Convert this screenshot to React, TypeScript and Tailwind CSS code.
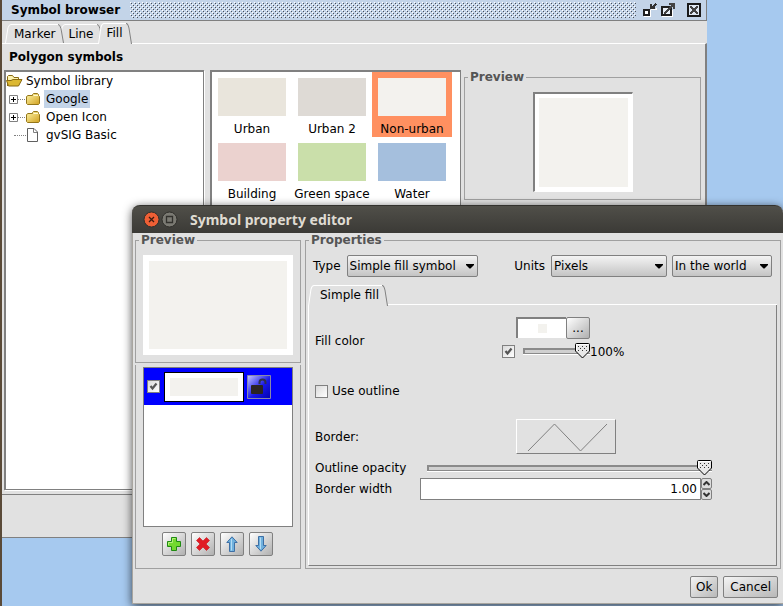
import { FC, InputHTMLAttributes, ReactNode, SelectHTMLAttributes, useState } from 'react';

interface SymbolItem {
  name: string;
  color: string;
}

const symbols: SymbolItem[] = [
  { name: 'Urban', color: 'bg-[#e9e5dc]' },
  { name: 'Urban 2', color: 'bg-[#dedad5]' },
  { name: 'Non-urban', color: 'bg-[#f3f2ee]' },
  { name: 'Building', color: 'bg-[#ebd2cf]' },
  { name: 'Green space', color: 'bg-[#cadfaa]' },
  { name: 'Water', color: 'bg-[#a5bfdd]' },
];

const folders = ['Google', 'Open Icon'];

interface TabProps {
  label: string;
  active?: boolean;
  wide?: boolean;
  className?: string;
}

const Tab: FC<TabProps> = ({ label, active, wide, className = '' }) => (
  <button
    type="button"
    role="tab"
    aria-selected={!!active}
    className={`relative flex items-stretch ${active ? 'z-20 -mb-px h-[21px]' : 'h-[19px]'} ${className}`}
  >
    <svg viewBox="0 0 6 20" preserveAspectRatio="none" className="h-full w-1.5">
      <path d="M0 20L3 4Q4 .5 6 .5V20Z" fill="#e1e1e1" />
      <path d="M.5 20L3 4Q4 .5 6 .5" fill="none" stroke="#fff" />
    </svg>
    <span
      className={`border-t border-white bg-[#e1e1e1] leading-[18px] ${wide ? 'pr-[3px] pl-1.5' : 'px-[3px]'}`}
    >
      {label}
    </span>
    <svg viewBox="0 0 6 20" preserveAspectRatio="none" className="h-full w-1.5">
      <path d="M0 .5Q2 .5 3 5L5.500 20H0Z" fill="#e1e1e1" />
      <path d="M0 .5Q2 .5 3 5L5.500 20" fill="none" stroke="#808080" />
    </svg>
  </button>
);

const Checkbox: FC<InputHTMLAttributes<HTMLInputElement>> = (props) => (
  <span className="relative block size-[13px] shrink-0">
    <input
      type="checkbox"
      className="peer block size-[13px] appearance-none border border-[#808080] bg-linear-to-br from-[#dadada] to-white"
      {...props}
    />
    <svg
      viewBox="0 0 13 13"
      className="pointer-events-none absolute inset-0 hidden size-[13px] peer-checked:block"
    >
      <path d="M3.500 6L5.500 8.500L9.500 3.500" fill="none" stroke="#555" strokeWidth="2.200" />
    </svg>
  </span>
);

const Select: FC<SelectHTMLAttributes<HTMLSelectElement>> = ({ className, ...props }) => (
  <span className={`relative block ${className}`}>
    <select
      className="block h-[22px] w-full appearance-none rounded-xs border border-[#808080] bg-linear-to-b from-[#f4f4f4] to-[#c4c4c4] pl-0.5 leading-5"
      {...props}
    />
    <svg viewBox="0 0 8 5" className="pointer-events-none absolute top-[9px] right-1 h-[5px] w-2">
      <path d="M0 0H8V1L4.500 4.500H3.500L0 1Z" />
    </svg>
  </span>
);

interface SliderProps {
  label: string;
  value: number;
  onChange: (value: number) => void;
  className?: string;
}

const Slider: FC<SliderProps> = ({ label, value, onChange, className }) => (
  <span className={`relative block h-4 ${className}`}>
    <span className="mt-[5px] block h-1.5 border-t-2 border-b border-l-2 border-[#8a8a8a] bg-[#d0d0d0] shadow-[0_1px_0_#fff]" />
    <span className="absolute inset-y-0 right-[15px] left-0">
      <svg
        viewBox="0 0 15 16"
        className="absolute top-0 h-4 w-[15px]"
        style={{ left: `${value}%` }}
      >
        <path d="M.5 1.500Q.5 .5 1.500 .5H13.500Q14.500 .5 14.500 1.500V8L7.500 15L.5 8Z" fill="#e8e8e8" stroke="#000" />
        <path d="M1.500 8V1.500H13.500" fill="none" stroke="#fff" />
        <path
          d="M3 3h1v1H3zM7 3h1v1H7zM11 3h1v1h-1zM5 5h1v1H5zM9 5h1v1H9zM3 7h1v1H3zM7 7h1v1H7zM11 7h1v1h-1z"
          fill="#333"
        />
      </svg>
    </span>
    <input
      type="range"
      aria-label={label}
      value={value}
      onChange={(e) => onChange(Number(e.target.value))}
      className="absolute inset-0 m-0 h-4 w-full opacity-0"
    />
  </span>
);

const Group: FC<{ title: string; className?: string; children: ReactNode }> = ({
  title,
  className = '',
  children,
}) => (
  <fieldset className={`min-w-0 border border-[#a0a0a0] ${className}`}>
    <legend className="ml-[3px] px-0.5 leading-[15px] font-bold text-[#555]">{title}</legend>
    {children}
  </fieldset>
);

const IconButton: FC<{ label: string; children: ReactNode }> = ({ label, children }) => (
  <button
    type="button"
    aria-label={label}
    className="flex size-6 items-center justify-center rounded-xs border border-[#808080] bg-linear-to-br from-white to-[#b0b0b0]"
  >
    {children}
  </button>
);

const FolderIcon: FC = () => (
  <svg viewBox="0 0 14 12" className="h-3 w-3.5">
    <defs>
      <linearGradient id="folder" x1="0" y1="0" x2="1" y2="1">
        <stop offset="0" stopColor="#fff6a8" />
        <stop offset="1" stopColor="#d0a020" />
      </linearGradient>
    </defs>
    <path
      d="M.5 3.500L2 2.500H6.500V1.500L7.500 .5H11.500L12.500 1.500V2.500L13.500 3.500V10.500L12.500 11.500H1.500L.5 10.500Z"
      fill="url(#folder)"
      stroke="#94761a"
    />
    <path d="M7.500 2.500H12" stroke="#fffbd0" />
  </svg>
);

const OpenFolderIcon: FC = () => (
  <svg viewBox="0 0 17 12" className="h-3 w-[17px]">
    <path d="M1.500 11V1.500L2.500 .5H6.500L8 2.500H12.500V5" fill="#fdf3b0" stroke="#8a6a10" />
    <path d="M.5 5.500H5L7 4.500H16L12.500 11H2.500Z" fill="#dcb832" stroke="#8a6a10" />
  </svg>
);

const SymbolBrowser: FC = () => {
  const [selected, setSelected] = useState('Non-urban');

  return (
    <section className="flex flex-1 flex-col border-b border-[#808080] bg-[#e1e1e1]">
      <header className="flex h-[21px] items-center border-r border-b border-[#808080] bg-[#c3d4e8] pr-[5px] pl-[9px]">
        <h1 className="w-[114px] leading-[18px] font-bold whitespace-nowrap">Symbol browser</h1>
        <svg className="mr-[7px] ml-[5px] h-4 min-w-0 flex-1">
          <defs>
            <pattern id="bumps" width="4" height="4" patternUnits="userSpaceOnUse">
              <path d="M0 0h1v1H0zM2 2h1v1H2z" fill="#fff" />
              <path d="M1 1h1v1H1zM3 3h1v1H3z" fill="#4a4f56" />
            </pattern>
          </defs>
          <rect width="100%" height="100%" fill="url(#bumps)" />
        </svg>
        <button type="button" aria-label="Minimize" className="mr-1">
          <svg viewBox="0 0 14 14" className="size-3.5" shapeRendering="crispEdges">
            <path d="M1 13.500H7.500V7" fill="none" stroke="#fff" />
            <path d="M1 7H6V12H1Z" fill="#fff" stroke="#1e1e1e" strokeWidth="2" />
            <path d="M7 1h2v3h3v2H7zM9 4V3h1V2h1V1h1V0h1v1h1v1h-1v1h-1v1z" fill="#333" />
            <path d="M8 6.500H13V5" fill="none" stroke="#fff" />
          </svg>
        </button>
        <button type="button" aria-label="Maximize" className="mr-3">
          <svg viewBox="0 0 14 14" className="size-3.5" shapeRendering="crispEdges">
            <path d="M1 13.500H11.500V7" fill="none" stroke="#fff" />
            <path d="M1 4H10V12H1Z" fill="#e6edf5" stroke="#1e1e1e" strokeWidth="2" />
            <path d="M3 11V9h1V8h1V7h1V6h1V5h1V4h1V3h1V2H8V0h6v6h-2V4h-1v1h-1v1H9v1H8v1H7v1H6v1H5v1z" fill="#444" />
          </svg>
        </button>
        <button type="button" aria-label="Close">
          <svg viewBox="0 0 14 14" className="size-3.5" shapeRendering="crispEdges">
            <path d="M0 0H14V14H0Z" fill="#1a1a1a" />
            <path d="M2 2H12V12H2Z" fill="#dfe8f2" />
            <path d="M3 3h2v1h1v1h2V4h1V3h2v2h-1v1H9v2h1v1h1v2H9v-1H8V9H6v1H5v1H3V9h1V8h1V6H4V5H3z" fill="#444" />
          </svg>
        </button>
      </header>

      <div className="flex h-[22px] items-end pl-[3px]" role="tablist">
        <Tab label="Marker" className="z-10" />
        <Tab label="Line" className="-ml-[5px]" />
        <Tab label="Fill" active className="-ml-[5px]" />
      </div>
      <div className="flex flex-1 flex-col border-t border-r-2 border-t-white border-r-[#808080]">
        <h2 className="pl-[7px] leading-[26px] font-bold">Polygon symbols</h2>
        <div className="flex flex-1 pr-1 pb-1 pl-0.5">
          <ul className="w-[200px] border border-t-2 border-l-2 border-[#808080] bg-white leading-[18px] shadow-[1px_1px_0_#fff]">
            <li>
              <div className="flex items-center">
                <OpenFolderIcon />
                <span className="px-[3px]">Symbol library</span>
              </div>
              <ul>
                {folders.map((name) => (
                  <li key={name} className="flex items-center pl-[3px]">
                    <svg viewBox="0 0 9 9" className="size-[9px]">
                      <path d="M.5 .5H8.500V8.500H.5Z" fill="#fff" stroke="#808080" />
                      <path d="M2 4.500H7M4.500 2V7" stroke="#000" />
                    </svg>
                    <span className="mr-px w-[7px] border-t border-dotted border-[#808080]" />
                    <FolderIcon />
                    <span className={`ml-1 px-0.5 ${name === 'Google' ? 'bg-[#c3d4e8]' : ''}`}>
                      {name}
                    </span>
                  </li>
                ))}
                <li className="flex items-center pl-2">
                  <span className="mr-px w-3 border-t border-dotted border-[#808080]" />
                  <svg viewBox="0 0 11 14" className="h-3.5 w-[11px]">
                    <path d="M.5 .5H7L10.500 4V13.500H.5Z" fill="#fff" stroke="#606060" />
                    <path d="M6.500 1V4.500H10" fill="none" stroke="#808080" />
                  </svg>
                  <span className="ml-1.5 px-0.5">gvSIG Basic</span>
                </li>
              </ul>
            </li>
          </ul>

          <div className="ml-1.5 w-[251px] border border-t-2 border-l-2 border-[#808080] bg-white">
            <div className="grid grid-cols-[repeat(3,80px)]">
              {symbols.map(({ name, color }) => (
                <button
                  key={name}
                  type="button"
                  onClick={() => setSelected(name)}
                  className={`flex h-[65px] flex-col items-center pt-1.5 ${selected === name ? 'bg-[#ff9060]' : ''}`}
                >
                  <span className={`h-[38px] w-[68px] shrink-0 ${color}`} />
                  <span className="mt-[5px] leading-4 whitespace-nowrap">{name}</span>
                </button>
              ))}
            </div>
          </div>

          <Group title="Preview" className="ml-[3px] h-[130px] flex-1">
            <div className="mx-auto mt-[7px] flex size-[100px] border border-t-2 border-l-2 border-white border-t-[#808080] border-l-[#808080] bg-white p-1">
              <div className="flex-1 bg-[#f3f2ee]" />
            </div>
          </Group>
        </div>
      </div>
      <footer className="h-[43px] border-t border-[#808080]" />
    </section>
  );
};

const SymbolPropertyEditor: FC = () => {
  const [fillEnabled, setFillEnabled] = useState(true);
  const [fillOpacity, setFillOpacity] = useState(100);
  const [outline, setOutline] = useState(false);
  const [outlineOpacity, setOutlineOpacity] = useState(100);
  const [borderWidth, setBorderWidth] = useState(1);

  return (
    <section
      role="dialog"
      aria-labelledby="editor-title"
      className="absolute top-[205px] right-0 bottom-0.5 left-[130px] z-30 flex flex-col rounded-t-lg border-b border-l border-[#a8a59f] bg-[#e1e1e1] shadow-[0_2px_10px_rgba(0,0,0,0.7)]"
    >
      <header className="-ml-px flex h-7 items-center rounded-t-lg border-t border-[#33322e] bg-linear-to-b from-[#504f49] to-[#3b3a36] pl-[11px]">
        <button type="button" aria-label="Close">
          <svg viewBox="0 0 17 17" className="size-[17px]">
            <circle cx="8.500" cy="8.500" r="7.500" fill="#ee5f35" stroke="#2f2e2a" />
            <path d="M6 6L11 11M11 6L6 11" stroke="#3a1a10" strokeWidth="1.300" />
          </svg>
        </button>
        <button type="button" aria-label="Maximize" className="ml-px">
          <svg viewBox="0 0 17 17" className="size-[17px]">
            <circle cx="8.500" cy="8.500" r="7.500" fill="#7b7a73" stroke="#2f2e2a" />
            <path d="M5.500 5.500H11.500V11.500H5.500Z" fill="none" stroke="#32312d" strokeWidth="1.300" />
          </svg>
        </button>
        <h2
          id="editor-title"
          className="ml-3 font-['Noto_Sans',sans-serif] text-[14px] leading-5 font-bold text-[#dfdbd2]"
        >
          Symbol property editor
        </h2>
      </header>

      <div className="flex flex-1 gap-1 px-0.5">
        <div className="flex w-[166px] flex-col">
          <Group title="Preview">
            <div className="m-[7px] flex h-[100px] bg-white p-1.5">
              <div className="flex-1 bg-[#f3f2ee]" />
            </div>
          </Group>
          <div className="mt-0.5 flex-1 border-x border-b border-[#a0a0a0] px-[7px] pt-0.5">
            <div className="h-40 border border-[#808080] bg-white">
              <div className="flex h-[37px] items-center bg-[#0000ff] pl-[3px]">
                <Checkbox aria-label="Show layer" defaultChecked />
                <div className="ml-1 flex h-[30px] w-20 border border-black bg-white p-[5px]">
                  <div className="flex-1 bg-[#f3f2ee]" />
                </div>
                <button type="button" aria-label="Unlock" className="ml-[3px]">
                  <svg viewBox="0 0 24 24" className="size-6">
                    <defs>
                      <linearGradient id="lock" x1="0" y1="0" x2="1" y2="1">
                        <stop offset="0" stopColor="#c8c8ff" />
                        <stop offset=".55" stopColor="#1818e8" />
                        <stop offset="1" stopColor="#0000b0" />
                      </linearGradient>
                    </defs>
                    <path d="M.5 .5H23.500V23.500H.5Z" fill="url(#lock)" stroke="#8888a8" />
                    <path d="M12.500 9V7.500Q12.500 4.500 15.500 4.500T18.500 7.500V9" fill="none" stroke="#30304c" strokeWidth="2" />
                    <rect x="4" y="10" width="12" height="9" rx="1" fill="#2b2422" />
                  </svg>
                </button>
              </div>
            </div>
            <div className="mt-[5px] flex justify-center gap-[5px] pr-0.5">
              <IconButton label="Add layer">
                <svg viewBox="0 0 14 14" className="size-3.5">
                  <path d="M4.500 .5H9.500V4.500H13.500V9.500H9.500V13.500H4.500V9.500H.5V4.500H4.500Z" fill="#73d92f" stroke="#1f8a12" />
                  <path d="M5.500 5.500V1.500H8.500M1.500 8V5.500H5.500" fill="none" stroke="#b5f07c" />
                </svg>
              </IconButton>
              <IconButton label="Remove layer">
                <svg viewBox="0 0 14 14" className="size-3.5">
                  <path d="M3.500 .5L7 4L10.500 .5L13.500 3.500L10 7L13.500 10.500L10.500 13.500L7 10L3.500 13.500L.5 10.500L4 7L.5 3.500Z" fill="#e01b24" stroke="#c81018" strokeWidth=".6" />
                </svg>
              </IconButton>
              <IconButton label="Move layer up">
                <svg viewBox="0 0 12 16" className="h-4 w-3">
                  <path d="M6 .8L11.200 6.500H8.500V15.500H3.500V6.500H.8Z" fill="#6fb1de" stroke="#3d6fa5" />
                  <path d="M5.500 3V14.500" stroke="#b4dcf4" />
                </svg>
              </IconButton>
              <IconButton label="Move layer down">
                <svg viewBox="0 0 12 16" className="h-4 w-3">
                  <path d="M6 15.200L11.200 9.500H8.500V.5H3.500V9.500H.8Z" fill="#6fb1de" stroke="#3d6fa5" />
                  <path d="M5.500 1.500V13" stroke="#b4dcf4" />
                </svg>
              </IconButton>
            </div>
          </div>
        </div>

        <Group title="Properties" className="flex-1">
          <div className="flex h-full flex-col pt-[7px] pr-[3px] pb-0.5 pl-0.5">
            <div className="flex items-center pr-[5px] pl-[5px]">
              <label htmlFor="type" className="mr-1.5">Type</label>
              <Select id="type" className="w-[131px]">
                <option>Simple fill symbol</option>
              </Select>
              <label htmlFor="units" className="mr-1.5 ml-auto">Units</label>
              <Select id="units" className="w-[116px]">
                <option>Pixels</option>
              </Select>
              <Select aria-label="Reference system" className="ml-[5px] w-[100px]">
                <option>In the world</option>
              </Select>
            </div>
            <div className="mt-2 flex h-5" role="tablist">
              <Tab label="Simple fill" active wide />
              <span className="flex-1 border-b border-white" />
            </div>
            <div className="flex-1 border-r border-b border-l border-[#808080] border-l-white pt-3 pr-16 pl-1.5">
              <div className="flex h-[47px] items-center">
                <span className="w-[187px]">Fill color</span>
                <div className="self-start">
                  <div className="flex pl-3.5">
                    <div className="flex h-[21px] w-[50px] items-center justify-center border-t-2 border-l-2 border-[#808080] bg-white">
                      <span className="size-[9px] bg-[#f3f2ee]" />
                    </div>
                    <button
                      type="button"
                      aria-label="Choose color"
                      className="h-[22px] w-6 rounded-xs border border-[#808080] bg-linear-to-br from-white to-[#b0b0b0]"
                    >
                      ...
                    </button>
                  </div>
                  <div className="mt-[3px] flex items-center">
                    <Checkbox
                      aria-label="Use fill"
                      checked={fillEnabled}
                      onChange={(e) => setFillEnabled(e.target.checked)}
                    />
                    <Slider
                      label="Fill opacity"
                      value={fillOpacity}
                      onChange={setFillOpacity}
                      className="ml-2 w-[67px]"
                    />
                    <span className="pt-0.5 leading-4">{fillOpacity}%</span>
                  </div>
                </div>
              </div>
              <label className="mt-5 flex h-3.5 w-fit items-center gap-1">
                <Checkbox checked={outline} onChange={(e) => setOutline(e.target.checked)} />
                Use outline
              </label>
              <div className="mt-[21px] flex items-center">
                <span className="w-[201px]">Border:</span>
                <button
                  type="button"
                  aria-label="Border style"
                  className="h-[35px] w-[100px] border border-[#808080] border-t-white border-l-white"
                >
                  <svg viewBox="0 0 98 33" className="h-[33px] w-[98px]">
                    <path d="M11 31L37.500 4L63.500 31L90 4" fill="none" stroke="#808080" />
                  </svg>
                </button>
              </div>
              <div className="mt-1.5 flex items-center">
                <span className="w-28 leading-4">Outline opacity</span>
                <Slider
                  label="Outline opacity"
                  value={outlineOpacity}
                  onChange={setOutlineOpacity}
                  className="flex-1"
                />
              </div>
              <div className="mt-0.5 flex items-center">
                <label htmlFor="border-width" className="w-[105px]">Border width</label>
                <input
                  id="border-width"
                  value={borderWidth.toFixed(2)}
                  readOnly
                  className="h-[22px] min-w-0 flex-1 border border-[#808080] bg-white pr-[3px] text-right"
                />
                <div className="flex w-[11px] flex-col">
                  <button
                    type="button"
                    aria-label="Increase"
                    onClick={() => setBorderWidth(borderWidth + 1)}
                    className="flex h-[11px] items-center justify-center rounded-xs border border-[#808080] bg-[#dcdcdc]"
                  >
                    <svg viewBox="0 0 7 5" className="h-[5px] w-[7px]">
                      <path d="M.5 4L3.500 1L6.500 4" fill="none" stroke="#333" strokeWidth="2" />
                    </svg>
                  </button>
                  <button
                    type="button"
                    aria-label="Decrease"
                    onClick={() => setBorderWidth(Math.max(0, borderWidth - 1))}
                    className="flex h-[11px] items-center justify-center rounded-xs border border-[#808080] bg-[#dcdcdc]"
                  >
                    <svg viewBox="0 0 7 5" className="h-[5px] w-[7px]">
                      <path d="M.5 1L3.500 4L6.500 1" fill="none" stroke="#333" strokeWidth="2" />
                    </svg>
                  </button>
                </div>
              </div>
            </div>
          </div>
        </Group>
      </div>

      <footer className="flex h-[34px] justify-end gap-[5px] pt-[7px] pr-[5px]">
        <button
          type="button"
          className="h-[22px] rounded-xs border border-[#808080] bg-linear-to-br from-[#f4f4f4] to-[#b8b8b8] px-[5px]"
        >
          Ok
        </button>
        <button
          type="button"
          className="h-[22px] rounded-xs border border-[#808080] bg-linear-to-br from-[#f4f4f4] to-[#b8b8b8] px-1.5"
        >
          Cancel
        </button>
      </footer>
    </section>
  );
};

const App: FC = () => (
  <main className="relative flex h-screen flex-col overflow-hidden border-l-2 border-[#5a4a38] bg-[#a6c9ef] pr-[76px] pb-[68px] font-['DejaVu_Sans',sans-serif] text-[12px] text-black">
    <SymbolBrowser />
    <SymbolPropertyEditor />
  </main>
);

export default App;
